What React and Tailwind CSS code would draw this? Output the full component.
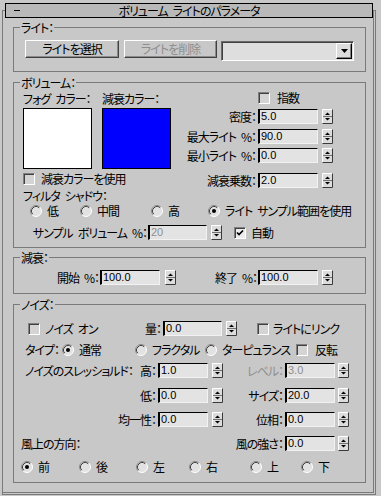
import React from "react";

const NUM = "font-['Liberation_Sans',Arial,sans-serif] text-[11px] leading-none tracking-normal";
const S = "\u2002";

function Input({ w, value, disabled }) {
  return (
    <div
      className={`${w} h-[15px] shrink-0 flex items-center pl-[1px] bg-[#e3e3e3] border-t border-l-2 border-r border-b border-t-black border-l-black border-r-[#f2f2f2] border-b-[#f2f2f2] ${NUM} ${
        disabled ? "text-[#8e8e8e]" : "text-black"
      }`}
    >
      {value}
    </div>
  );
}

function Spin({ className = "" }) {
  return (
    <svg width="11" height="15" viewBox="0 0 11 15" className={`block shrink-0 ${className}`}>
      <rect width="11" height="15" fill="#dcdcdc" />
      <path d="M0.5 14V0.5H10" stroke="#ffffff" fill="none" />
      <path d="M0.5 14.5H10.5V0.5" stroke="#3a3a3a" fill="none" />
      <path d="M1 7.5H10" stroke="#707070" />
      <polygon points="3,6 8,6 5.5,3.5" fill="#000" />
      <polygon points="3,9 8,9 5.5,11.5" fill="#000" />
    </svg>
  );
}

function Radio({ on }) {
  return (
    <svg width="12" height="12" viewBox="0 0 12 12" className="block shrink-0">
      <circle cx="6" cy="6" r="5.5" fill="#e2e2e2" />
      <path d="M2.11 9.89A5.5 5.5 0 0 1 9.89 2.11" stroke="#8a8a8a" fill="none" />
      <path d="M2.82 9.18A4.5 4.5 0 0 1 9.18 2.82" stroke="#404040" fill="none" />
      <path d="M9.89 2.11A5.5 5.5 0 0 1 2.11 9.89" stroke="#ffffff" fill="none" />
      {on && <circle cx="6" cy="6" r="2" fill="#000" />}
    </svg>
  );
}

function Check({ on }) {
  return (
    <div
      className={`w-[12px] h-[12px] shrink-0 flex items-center justify-center border border-t-[#808080] border-l-[#808080] border-r-white border-b-white shadow-[inset_1px_1px_0_#404040] ${
        on ? "bg-[#ececec]" : "bg-[#d4d4d4]"
      }`}
    >
      {on && (
        <svg width="8" height="8" viewBox="0 0 8 8" className="block">
          <path d="M1 3.5L3 5.5L7 1.5" stroke="#000" strokeWidth="1.7" fill="none" />
        </svg>
      )}
    </div>
  );
}

function Btn({ w, children, disabled }) {
  return (
    <div
      className={`${w} h-[18px] shrink-0 flex items-center justify-center border border-t-white border-l-white border-r-[#404040] border-b-[#404040] shadow-[inset_-1px_-1px_0_#8a8a8a] ${
        disabled ? "text-[#8e8e8e]" : "text-black"
      }`}
    >
      {children}
    </div>
  );
}

function Group({ label, h, className = "", children }) {
  return (
    <fieldset className={`${h} ${className} border border-[#7a7a7a]`}>
      <legend className="ml-[6px] px-[1px] leading-[13px]">{label}</legend>
      {children}
    </fieldset>
  );
}

function NumRow({ label, value, className = "" }) {
  return (
    <div className={`flex items-center ${className}`}>
      <span className="mr-[2px] whitespace-nowrap">{label}</span>
      <Input w="w-[60px]" value={value} />
      <Spin className="ml-[4px]" />
    </div>
  );
}

function RadioItem({ w, on, label }) {
  return (
    <div className={`${w} shrink-0 flex items-center`}>
      <Radio on={on} />
      <span className="ml-[5px] whitespace-nowrap">{label}</span>
    </div>
  );
}

export default function App() {
  return (
    <div className="w-[381px] h-[496px] overflow-hidden bg-[#c8c8c8] pt-[10px] pl-[2px] text-[12px] leading-[14px] tracking-[-1px] text-black font-['Noto_Sans_CJK_JP','Noto_Sans',sans-serif] [font-feature-settings:'palt']">
      <div className="w-[374px] h-[485px] border border-[#7a7a7a] shadow-[inset_-1px_-1px_0_#c8c8c8,inset_-2px_-2px_0_#7a7a7a]">
        {/* title bar */}
        <div className="relative -mt-[8px] ml-[2px] w-[368px] h-[15px] border border-black bg-[#b9b9b9] grid grid-cols-[1fr_auto_1fr] items-center leading-[13px]">
          <div className="ml-[8px] w-[6px] h-[1px] bg-black" />
          <div className="whitespace-nowrap">{`ボリューム${S}ライトのパラメータ`}</div>
          <div />
        </div>

        <div className="ml-[10px] w-[353px]">
          {/* Light */}
          <Group label="ライト：" h="h-[51px]" className="mt-[3px]">
            <div className="flex items-start pt-[6px] pl-[11px]">
              <Btn w="w-[94px]">ライトを選択</Btn>
              <div className="ml-[5px]">
                <Btn w="w-[93px]" disabled>
                  ライトを削除
                </Btn>
              </div>
              <div className="ml-[4px] mt-[1px] w-[133px] h-[20px] flex items-center justify-end pr-[1px] bg-[#dedede] border border-t-[#6a6a6a] border-l-[#6a6a6a] border-r-white border-b-white shadow-[inset_1px_1px_0_#404040]">
                <div className="w-[16px] h-[16px] flex items-center justify-center bg-[#dcdcdc] border border-t-white border-l-white border-r-black border-b-black shadow-[inset_-1px_-1px_0_#808080]">
                  <svg width="7" height="4" viewBox="0 0 7 4" className="block">
                    <polygon points="0,0 7,0 3.5,4" fill="#000" />
                  </svg>
                </div>
              </div>
            </div>
          </Group>

          {/* Volume */}
          <Group label="ボリューム：" h="h-[172px]" className="mt-[4px]">
            <div className="flex items-start">
              <div className="pl-[9px] flex flex-col">
                <div className="h-[19px] pt-[3px] flex">
                  <span className="w-[79px] whitespace-nowrap">{`フォグ${S}カラー：`}</span>
                  <span className="whitespace-nowrap">減衰カラー：</span>
                </div>
                <div className="flex">
                  <div className="w-[69px] h-[61px] bg-white border border-black" />
                  <div className="ml-[10px] w-[69px] h-[61px] bg-[#0000ff] border border-black" />
                </div>
                <div className="mt-[4px] h-[12px] flex items-center">
                  <Check />
                  <span className="ml-[6px] whitespace-nowrap">減衰カラーを使用</span>
                </div>
              </div>
              <div className="ml-auto pr-[32px] flex flex-col items-end">
                <div className="mt-[3px] w-[75px] h-[12px] flex items-center">
                  <Check />
                  <span className="ml-[7px]">指数</span>
                </div>
                <NumRow className="mt-[5px]" label="密度：" value="5.0" />
                <NumRow className="mt-[5px]" label={`最大ライト${S}%：`} value="90.0" />
                <NumRow className="mt-[4px]" label={`最小ライト${S}%：`} value="0.0" />
                <NumRow className="mt-[10px]" label="減衰乗数：" value="2.0" />
              </div>
            </div>
            <div className="mt-[1px] h-[13px] leading-[13px] pl-[9px] whitespace-nowrap">{`フィルタ${S}シャドウ：`}</div>
            <div className="mt-[2px] h-[14px] pl-[16px] flex items-center">
              <RadioItem w="w-[50px]" label="低" />
              <RadioItem w="w-[71px]" label="中間" />
              <RadioItem w="w-[57px]" label="高" />
              <RadioItem w="w-[140px]" on label={`ライト${S}サンプル範囲を使用`} />
            </div>
            <div className="mt-[7px] h-[15px] flex items-center">
              <span className="w-[133px] text-right whitespace-nowrap">{`サンプル${S}ボリューム${S}%：`}</span>
              <div className="ml-[1px]">
                <Input w="w-[59px]" value="20" disabled />
              </div>
              <Spin className="ml-[4px]" />
              <div className="ml-[12px]">
                <Check on />
              </div>
              <span className="ml-[5px]">自動</span>
            </div>
          </Group>

          {/* Attenuation */}
          <Group label="減衰：" h="h-[43px]" className="mt-[3px]">
            <div className="pt-[6px] h-[21px] flex items-center">
              <span className="w-[85px] text-right whitespace-nowrap">{`開始${S}%：`}</span>
              <div className="ml-[1px]">
                <Input w="w-[60px]" value="100.0" />
              </div>
              <Spin className="ml-[5px]" />
              <span className="w-[81px] text-right whitespace-nowrap">{`終了${S}%：`}</span>
              <div className="ml-[1px]">
                <Input w="w-[60px]" value="100.0" />
              </div>
              <Spin className="ml-[4px]" />
            </div>
          </Group>

          {/* Noise */}
          <Group label="ノイズ：" h="h-[185px]" className="mt-[4px]">
            {/* row 1 */}
            <div className="mt-[10px] h-[15px] flex items-center">
              <div className="w-[126px] pl-[14px] flex items-center">
                <Check />
                <span className="ml-[5px] whitespace-nowrap">{`ノイズ${S}オン`}</span>
              </div>
              <span className="w-[21px] text-right">量：</span>
              <div className="ml-[2px]">
                <Input w="w-[59px]" value="0.0" />
              </div>
              <Spin className="ml-[4px]" />
              <div className="ml-[20px]">
                <Check />
              </div>
              <span className="ml-[4px] whitespace-nowrap">ライトにリンク</span>
            </div>
            {/* row 2 */}
            <div className="mt-[7px] h-[14px] pl-[11px] flex items-center">
              <span className="w-[37px] whitespace-nowrap">タイプ：</span>
              <RadioItem w="w-[73px]" on label="通常" />
              <RadioItem w="w-[70px]" label="フラクタル" />
              <RadioItem w="w-[91px]" label="ターピュランス" />
              <Check />
              <span className="ml-[7px]">反転</span>
            </div>
            {/* row 3 */}
            <div className="mt-[6px] h-[15px] flex items-center">
              <div className="w-[142px] pl-[11px] flex justify-between whitespace-nowrap">
                <span>ノイズのスレッショルド：</span>
                <span>高：</span>
              </div>
              <div className="ml-[2px]">
                <Input w="w-[50px]" value="1.0" />
              </div>
              <Spin className="ml-[4px]" />
              <span className="w-[60px] text-right text-[#8e8e8e] whitespace-nowrap">レベル：</span>
              <div className="ml-[2px]">
                <Input w="w-[50px]" value="3.0" disabled />
              </div>
              <Spin className="ml-[3px]" />
            </div>
            {/* row 4 */}
            <div className="mt-[10px] h-[15px] flex items-center">
              <span className="w-[142px] text-right">低：</span>
              <div className="ml-[2px]">
                <Input w="w-[50px]" value="0.0" />
              </div>
              <Spin className="ml-[4px]" />
              <span className="w-[60px] text-right whitespace-nowrap">サイズ：</span>
              <div className="ml-[2px]">
                <Input w="w-[50px]" value="20.0" />
              </div>
              <Spin className="ml-[3px]" />
            </div>
            {/* row 5 */}
            <div className="mt-[9px] h-[15px] flex items-center">
              <span className="w-[142px] text-right">均一性：</span>
              <div className="ml-[2px]">
                <Input w="w-[50px]" value="0.0" />
              </div>
              <Spin className="ml-[4px]" />
              <span className="w-[60px] text-right whitespace-nowrap">位相：</span>
              <div className="ml-[2px]">
                <Input w="w-[50px]" value="0.0" />
              </div>
              <Spin className="ml-[3px]" />
            </div>
            {/* row 6 */}
            <div className="mt-[9px] h-[15px] flex items-center">
              <span className="w-[209px] pl-[7px] whitespace-nowrap">風上の方向：</span>
              <span className="w-[60px] text-right whitespace-nowrap">風の強さ：</span>
              <div className="ml-[2px]">
                <Input w="w-[50px]" value="0.0" />
              </div>
              <Spin className="ml-[3px]" />
            </div>
            {/* row 7 */}
            <div className="mt-[9px] h-[14px] pl-[7px] flex items-center">
              <RadioItem w="w-[58px]" on label="前" />
              <RadioItem w="w-[57px]" label="後" />
              <RadioItem w="w-[53px]" label="左" />
              <RadioItem w="w-[61px]" label="右" />
              <RadioItem w="w-[51px]" label="上" />
              <RadioItem w="w-[30px]" label="下" />
            </div>
          </Group>
        </div>
      </div>
    </div>
  );
}
